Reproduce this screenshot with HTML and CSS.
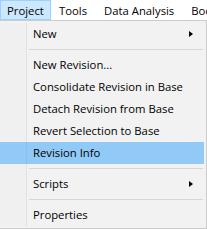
FILE: index.html
```html
<!DOCTYPE html>
<html>
<head>
<meta charset="utf-8">
<link rel="stylesheet" href="styles.css">
</head>
<body>
<div class="menubar">
  <div class="top active">Project</div>
  <div class="top">Tools</div>
  <div class="top">Data Analysis</div>
  <div class="top">Bookmarks</div>
</div>
<div class="dropdown">
  <div class="item"><span class="label">New</span><span class="arrow"></span></div>
  <div class="sep"></div>
  <div class="item"><span class="label">New Revision...</span></div>
  <div class="item"><span class="label">Consolidate Revision in Base</span></div>
  <div class="item"><span class="label">Detach Revision from Base</span></div>
  <div class="item"><span class="label">Revert Selection to Base</span></div>
  <div class="item hover"><span class="label">Revision Info</span></div>
  <div class="sep"></div>
  <div class="item"><span class="label">Scripts</span><span class="arrow"></span></div>
  <div class="sep"></div>
  <div class="item"><span class="label">Properties</span></div>
</div>
</body>
</html>
```
FILE: styles.css
```css
html, body {
  margin: 0;
  padding: 0;
  background: #ffffff;
  overflow: hidden;
  width: 207px;
  height: 229px;
}
body {
  font-family: "Open Sans", "Noto Sans", sans-serif;
  font-size: 11.3px;
  color: #000;
}
.menubar {
  display: flex;
  height: 20px;
  background: #ffffff;
  white-space: nowrap;
  overflow: hidden;
}
.top {
  flex: none;
  height: 20px;
  line-height: 19px;
  padding: 0 8px 0 7px;
  box-sizing: border-box;
  border: 1px solid transparent;
}
.top.active {
  background: #cce8ff;
  border-color: #99d1ff;
  padding: 0 6px 0 6px;
  width: 51px;
}
.dropdown {
  margin-left: -3px;
  width: 210px;
  box-sizing: border-box;
  border: 1px solid #cccccc;
  padding: 2px;
  background: #f2f2f2;
  display: flex;
  flex-direction: column;
}
.item {
  height: 22px;
  display: flex;
  align-items: center;
  justify-content: space-between;
  background: linear-gradient(to right, #f0f0f0 0, #f0f0f0 26px, #e2e2e2 26px, #e2e2e2 27px, transparent 27px);
}
.item.hover {
  background: linear-gradient(to right, #91c9f7 0, #91c9f7 26px, #88c0ee 26px, #88c0ee 27px, #91c9f7 27px);
}
.label {
  padding-left: 33px;
  line-height: 22px;
  white-space: nowrap;
}
.arrow {
  width: 0;
  height: 0;
  border-top: 3.5px solid transparent;
  border-bottom: 3.5px solid transparent;
  border-left: 4px solid #000;
  margin-right: 11px;
}
.sep {
  height: 9px;
  position: relative;
  background: linear-gradient(to right, #f0f0f0 0, #f0f0f0 26px, #e2e2e2 26px, #e2e2e2 27px, transparent 27px);
}
.sep::after {
  content: "";
  display: block;
  height: 1px;
  margin: 4px 1px 0 29px;
  background: #d7d7d7;
}
```
